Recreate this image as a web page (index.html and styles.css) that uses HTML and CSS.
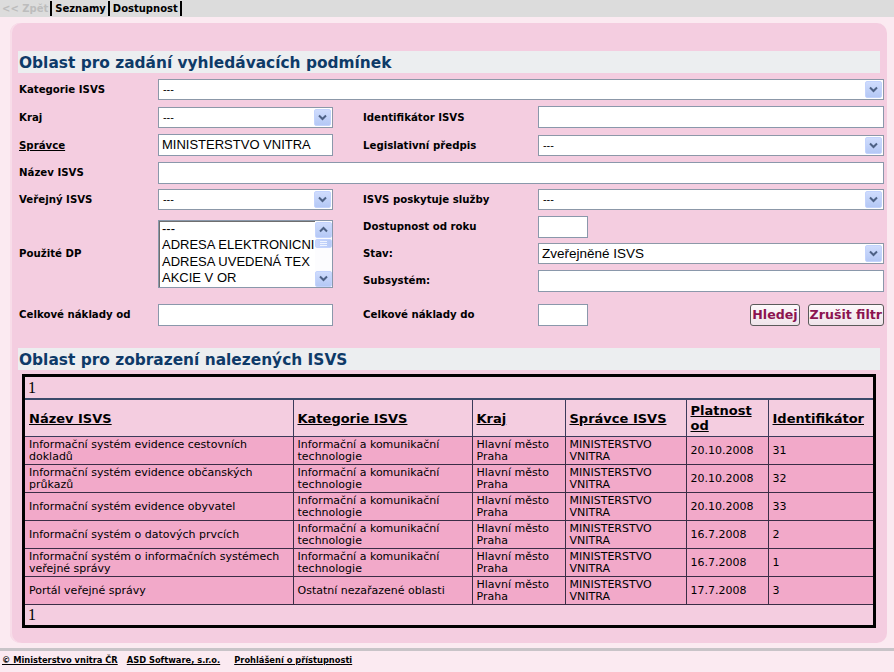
FILE: index.html
```html
<!DOCTYPE html>
<html lang="cs">
<head>
<meta charset="utf-8">
<title>Seznam ISVS</title>
<link rel="stylesheet" href="styles.css">
</head>
<body>
<div class="topbar">
  <span class="back">&lt;&lt; Zpět</span><span class="sep"></span><a class="nav">Seznamy</a><span class="sep"></span><a class="nav">Dostupnost</a><span class="sep"></span>
</div>
<div class="page">
  <div class="panel">
    <h2 class="sect">Oblast pro zadání vyhledávacích podmínek</h2>
    <div class="form">
      <div class="lbl">Kategorie ISVS</div>
      <div class="sel span4"><span class="val">---</span><span class="arr"><svg width="9" height="7" viewBox="0 0 9 7"><path d="M1 1.5 L4.5 5 L8 1.5" fill="none" stroke="#4d6185" stroke-width="2"/></svg></span></div>

      <div class="lbl">Kraj</div>
      <div class="sel"><span class="val">---</span><span class="arr"><svg width="9" height="7" viewBox="0 0 9 7"><path d="M1 1.5 L4.5 5 L8 1.5" fill="none" stroke="#4d6185" stroke-width="2"/></svg></span></div>
      <div class="lbl c4">Identifikátor ISVS</div>
      <div class="inp"></div>

      <div class="lbl"><u>Správce</u></div>
      <div class="inp txt">MINISTERSTVO VNITRA</div>
      <div class="lbl c4">Legislativní předpis</div>
      <div class="sel"><span class="val">---</span><span class="arr"><svg width="9" height="7" viewBox="0 0 9 7"><path d="M1 1.5 L4.5 5 L8 1.5" fill="none" stroke="#4d6185" stroke-width="2"/></svg></span></div>

      <div class="lbl">Název ISVS</div>
      <div class="inp span4"></div>

      <div class="lbl">Veřejný ISVS</div>
      <div class="sel"><span class="val">---</span><span class="arr"><svg width="9" height="7" viewBox="0 0 9 7"><path d="M1 1.5 L4.5 5 L8 1.5" fill="none" stroke="#4d6185" stroke-width="2"/></svg></span></div>
      <div class="lbl c4">ISVS poskytuje služby</div>
      <div class="sel"><span class="val">---</span><span class="arr"><svg width="9" height="7" viewBox="0 0 9 7"><path d="M1 1.5 L4.5 5 L8 1.5" fill="none" stroke="#4d6185" stroke-width="2"/></svg></span></div>

      <div class="lbl rows3">Použité DP</div>
      <div class="listbox rows3">
        <div class="items">
          <div>---</div>
          <div>ADRESA ELEKTRONICNI</div>
          <div>ADRESA UVEDENÁ TEX</div>
          <div>AKCIE V OR</div>
        </div>
        <div class="sb">
          <span class="sbtn"><svg width="9" height="7" viewBox="0 0 9 7"><path d="M1 5.5 L4.5 2 L8 5.5" fill="none" stroke="#4d6185" stroke-width="2"/></svg></span>
          <span class="track"><span class="thumb"><i></i><i></i><i></i></span></span>
          <span class="sbtn"><svg width="9" height="7" viewBox="0 0 9 7"><path d="M1 1.5 L4.5 5 L8 1.5" fill="none" stroke="#4d6185" stroke-width="2"/></svg></span>
        </div>
      </div>
      <div class="lbl c4">Dostupnost od roku</div>
      <div class="inp small"></div>
      <div class="lbl c4">Stav:</div>
      <div class="sel"><span class="val big">Zveřejněné ISVS</span><span class="arr"><svg width="9" height="7" viewBox="0 0 9 7"><path d="M1 1.5 L4.5 5 L8 1.5" fill="none" stroke="#4d6185" stroke-width="2"/></svg></span></div>
      <div class="lbl c4">Subsystém:</div>
      <div class="inp"></div>

      <div class="lbl">Celkové náklady od</div>
      <div class="inp"></div>
      <div class="lbl c4">Celkové náklady do</div>
      <div class="lastcell">
        <div class="inp small"></div>
        <div class="btns">
          <button class="btn">Hledej</button>
          <button class="btn">Zrušit filtr</button>
        </div>
      </div>
    </div>

    <h2 class="sect sect2">Oblast pro zobrazení nalezených ISVS</h2>
    <div class="results">
      <div class="pager">1</div>
      <table class="grid">
        <colgroup>
          <col class="w1"><col class="w2"><col class="w3"><col class="w4"><col class="w5"><col class="w6">
        </colgroup>
        <thead>
          <tr>
            <th><u>Název ISVS</u></th>
            <th><u>Kategorie ISVS</u></th>
            <th><u>Kraj</u></th>
            <th><u>Správce ISVS</u></th>
            <th><u>Platnost od</u></th>
            <th><u>Identifikátor</u></th>
          </tr>
        </thead>
        <tbody>
          <tr><td>Informační systém evidence cestovních dokladů</td><td>Informační a komunikační technologie</td><td>Hlavní město Praha</td><td>MINISTERSTVO VNITRA</td><td>20.10.2008</td><td>31</td></tr>
          <tr><td>Informační systém evidence občanských průkazů</td><td>Informační a komunikační technologie</td><td>Hlavní město Praha</td><td>MINISTERSTVO VNITRA</td><td>20.10.2008</td><td>32</td></tr>
          <tr><td>Informační systém evidence obyvatel</td><td>Informační a komunikační technologie</td><td>Hlavní město Praha</td><td>MINISTERSTVO VNITRA</td><td>20.10.2008</td><td>33</td></tr>
          <tr><td>Informační systém o datových prvcích</td><td>Informační a komunikační technologie</td><td>Hlavní město Praha</td><td>MINISTERSTVO VNITRA</td><td>16.7.2008</td><td>2</td></tr>
          <tr><td>Informační systém o informačních systémech veřejné správy</td><td>Informační a komunikační technologie</td><td>Hlavní město Praha</td><td>MINISTERSTVO VNITRA</td><td>16.7.2008</td><td>1</td></tr>
          <tr><td>Portál veřejné správy</td><td>Ostatní nezařazené oblasti</td><td>Hlavní město Praha</td><td>MINISTERSTVO VNITRA</td><td>17.7.2008</td><td>3</td></tr>
        </tbody>
      </table>
      <div class="pager bottom">1</div>
    </div>
  </div>
</div>
<div class="footer">
  <a>© Ministerstvo vnitra ČR</a>
  <a>ASD Software, s.r.o.</a>
  <a>Prohlášení o přístupnosti</a>
</div>
</body>
</html>
```

FILE: styles.css
```css
html, body {
  margin: 0;
  padding: 0;
}
body {
  background: #fbeaf1;
  font-family: "DejaVu Sans", Verdana, sans-serif;
  color: #000;
  width: 894px;
  height: 672px;
  overflow: hidden;
}

/* top navigation */
.topbar {
  height: 17px;
  background: #dcdcdc;
  display: flex;
  align-items: center;
  font-size: 10px;
  font-weight: bold;
  padding-left: 2px;
}
.back {
  color: #bdbdbd;
  padding-right: 2px;
}
.nav {
  color: #000;
  padding: 0 2px 0 3px;
}
.sep {
  width: 2px;
  height: 15px;
  background: #000;
}

/* main panel */
.page {
  padding: 6px 7px 0 10px;
}
.panel {
  background: #f4cde0;
  border-radius: 10px;
  height: 620px;
  box-sizing: border-box;
  padding: 28px 3px 0 8px;
  box-shadow: inset 2px 0 0 #f8dde9;
}
.sect {
  margin: 0 4px 3px 0;
  height: 22px;
  line-height: 24px;
  background: #eceef0;
  color: #0e3a68;
  font-size: 15.4px;
  font-weight: bold;
  padding-left: 1px;
}
.sect2 {
  margin-top: 13px;
  margin-bottom: 4px;
}

/* form grid */
.form {
  display: grid;
  grid-template-columns: 139px 175px 30px 175px 346px;
  grid-template-rows: 27px 28px 28px 27px 27px 27px 27px 27px 41px;
  margin-left: 1px;
}
.lbl {
  align-self: center;
  font-size: 10.2px;
  font-weight: bold;
  grid-column: 1;
}
.c4 {
  grid-column: 4;
}
.span4 {
  grid-column: 2 / 6;
}
.rows3 {
  grid-row: span 3;
}
.inp, .sel {
  align-self: center;
  height: 22px;
  box-sizing: border-box;
  background: #fff;
  border: 1px solid #8a98ab;
}
.inp.txt {
  font-family: "Liberation Sans", Arial, sans-serif;
  font-size: 13px;
  line-height: 20px;
  padding-left: 3px;
}
.inp.small {
  width: 50px;
}
.sel {
  display: flex;
  align-items: center;
  justify-content: space-between;
  height: 21px;
  border-color: #8c98a8;
}
.val {
  font-size: 10px;
  padding-left: 4px;
}
.val.big {
  font-family: "Liberation Sans", Arial, sans-serif;
  font-size: 13.5px;
  padding-left: 3px;
}
.arr, .sbtn {
  width: 17px;
  height: 17px;
  box-sizing: border-box;
  margin-right: 1px;
  border: 1px solid #c3d3fd;
  border-radius: 2px;
  background: linear-gradient(#cfdcfd, #b4c8f5);
  display: flex;
  align-items: center;
  justify-content: center;
}

/* listbox */
.listbox {
  align-self: center;
  height: 68px;
  width: 175px;
  box-sizing: border-box;
  border: 1px solid #8a98ab;
  box-shadow: inset 1px 1px 0 #6f6f6f;
  background: #fff;
  display: flex;
}
.items {
  flex: 1;
  overflow: hidden;
  white-space: nowrap;
  font-family: "Liberation Sans", Arial, sans-serif;
  font-size: 13px;
  line-height: 16.5px;
  padding: 0 0 0 3px;
}
.sb {
  width: 17px;
  display: flex;
  flex-direction: column;
  background: #fcfcfe;
  padding-top: 1px;
}
.sb .sbtn {
  height: 16px;
  margin: 0;
}
.track {
  flex: 1;
  display: flex;
  flex-direction: column;
}
.thumb {
  height: 9px;
  margin-top: 1px;
  box-sizing: border-box;
  border: 1px solid #c3d3fd;
  border-radius: 2px;
  background: linear-gradient(90deg, #c9d8fd, #b6c9f6);
  display: flex;
  flex-direction: column;
  align-items: center;
  justify-content: center;
  gap: 1px;
}
.thumb i {
  display: block;
  width: 7px;
  height: 1px;
  background: #eef3ff;
}

/* last cell with buttons */
.lastcell {
  align-self: center;
  display: flex;
  align-items: center;
  justify-content: space-between;
}
.btns {
  display: flex;
  gap: 8px;
}
.btn {
  font-family: "DejaVu Sans", Verdana, sans-serif;
  font-size: 12.6px;
  font-weight: bold;
  color: #8c1450;
  background: linear-gradient(#fdf9fb, #efe4ea);
  border: 1px solid #5a5a5a;
  border-radius: 3px;
  height: 22px;
  padding: 0 1px;
  margin: 0;
  line-height: 18px;
}

/* results */
.results {
  margin: 0 8px 0 4px;
  border: 3px solid #000;
  background: #f4cde0;
}
.pager {
  font-family: "Liberation Serif", "Times New Roman", serif;
  font-size: 16px;
  height: 21px;
  line-height: 22px;
  padding-left: 3px;
}
.pager.bottom {
  height: 20px;
  line-height: 20px;
}
.grid {
  border-collapse: collapse;
  width: 848px;
  table-layout: fixed;
}
.w1 { width: 268px; }
.w2 { width: 179px; }
.w3 { width: 93px; }
.w4 { width: 121px; }
.w5 { width: 82px; }
.w6 { width: 105px; }
.grid th {
  height: 36px;
  text-align: left;
  font-size: 13px;
  font-weight: bold;
  line-height: 15px;
  padding: 0 3px 0 4px;
  border: 1px solid #3b3a5a;
  border-top: 2px solid #3b4a6a;
  background: #f4cde0;
}
.grid td {
  height: 26px;
  background: #f2a9c9;
  font-size: 11px;
  line-height: 12.5px;
  padding: 1px 3px 0 4px;
  border: 1px solid #3a2d46;
}
.grid th:first-child, .grid td:first-child {
  border-left: none;
}
.grid th:last-child, .grid td:last-child {
  border-right: none;
}

/* footer */
.footer {
  margin-top: 5px;
  border-top: 3px solid #c8c4c8;
  padding: 4px 0 0 2px;
  display: flex;
  gap: 9px;
  font-size: 8.3px;
  font-weight: bold;
}
.footer a {
  text-decoration: underline;
  color: #000;
}
.footer a + a + a {
  margin-left: 5px;
}
```
